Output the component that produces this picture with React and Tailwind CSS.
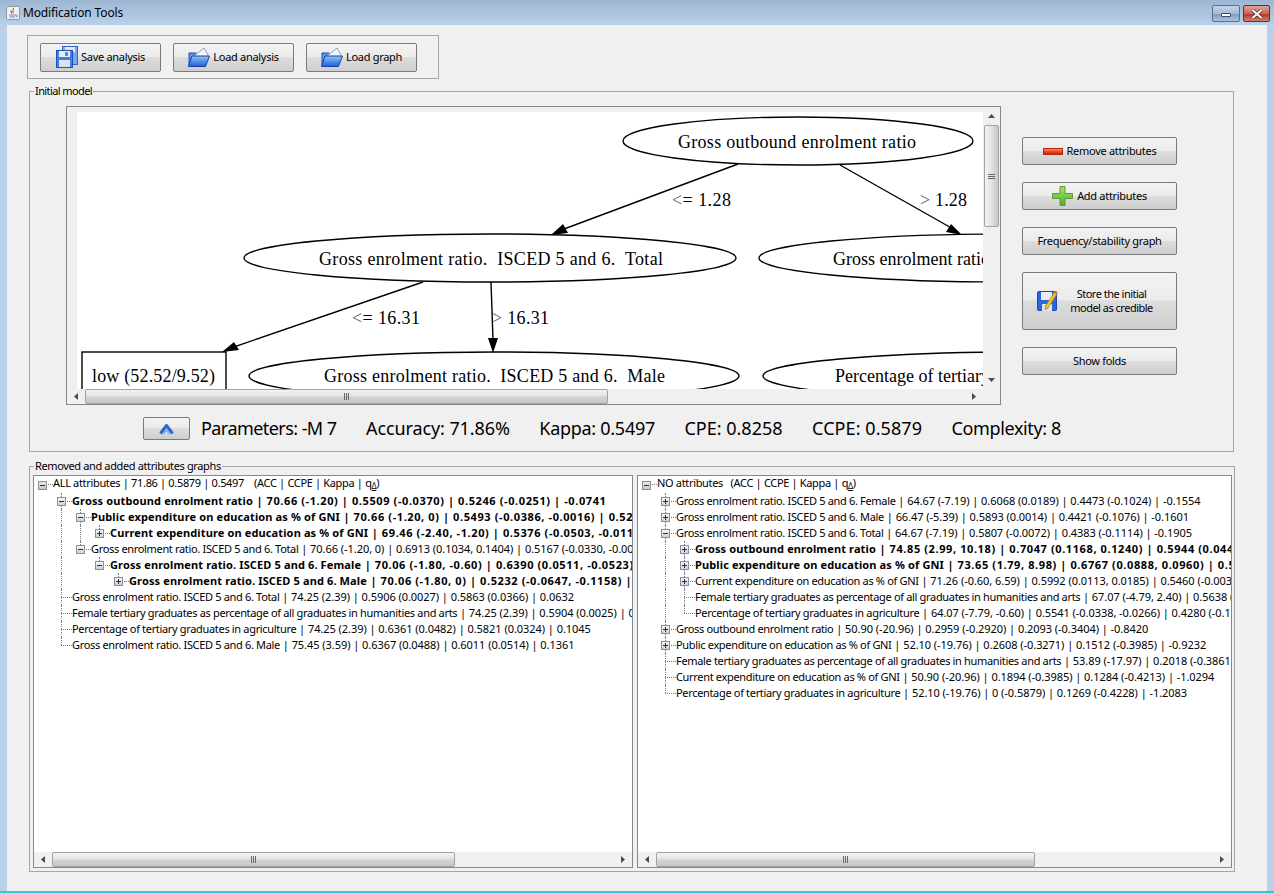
import React from "react";

const Btn = ({ className = "", children }) => (
  <div className={"relative flex items-center justify-center rounded-[2px] border border-[#7b7b7b] bg-[linear-gradient(#f3f3f3_0%,#ebebeb_48%,#dddddd_50%,#cecece_100%)] text-[11px] leading-[14px] tracking-[-0.3px] text-black " + className}>
    {children}
  </div>
);

const Floppy = () => (
  <svg width="22" height="22" viewBox="0 0 22 22" className="shrink-0">
    <rect x="6.5" y="0.5" width="15" height="18" fill="#7fa8ec" stroke="#2f62c9" />
    <rect x="9" y="1" width="10" height="5" fill="#dfe8f7" />
    <rect x="0.5" y="4.5" width="16" height="17" fill="#3f7fe6" stroke="#1f50b5" />
    <rect x="3" y="5" width="11" height="6" fill="#e9eef7" />
    <rect x="9" y="6" width="3" height="4" fill="#6f8ab5" />
    <rect x="3" y="14" width="11" height="7" fill="#dbe3ef" />
  </svg>
);

const Folder = () => (
  <svg width="22" height="20" viewBox="0 0 22 20" className="shrink-0">
    <defs>
      <linearGradient id="fd" x1="0" y1="0" x2="0" y2="1">
        <stop offset="0" stopColor="#8fc4f7" />
        <stop offset="1" stopColor="#1c5fd8" />
      </linearGradient>
    </defs>
    <path d="M1 6 L8 6 L10 8 L10 18 L1 18 Z" fill="#5f96e6" stroke="#1d4db3" />
    <path d="M6 9 L16 1 L20 8 L20 11 L8 12 Z" fill="#f4f6fb" stroke="#8ea0c0" />
    <path d="M4 9 L21.5 9 L17.5 19.5 L0.5 19.5 Z" fill="url(#fd)" stroke="#1742a8" />
  </svg>
);

const RedBar = () => (
  <svg width="20" height="7" viewBox="0 0 20 7" className="shrink-0">
    <defs>
      <linearGradient id="rb" x1="0" y1="0" x2="0" y2="1">
        <stop offset="0" stopColor="#ff9a6a" />
        <stop offset="0.5" stopColor="#f04a1c" />
        <stop offset="1" stopColor="#c81808" />
      </linearGradient>
    </defs>
    <rect x="0.5" y="0.5" width="19" height="6" fill="url(#rb)" stroke="#b02a14" />
  </svg>
);

const GreenPlus = () => (
  <svg width="21" height="20" viewBox="0 0 21 20" className="shrink-0">
    <defs>
      <linearGradient id="gp" x1="0" y1="0" x2="0" y2="1">
        <stop offset="0" stopColor="#a6e46a" />
        <stop offset="1" stopColor="#4eae2c" />
      </linearGradient>
    </defs>
    <path d="M8 .5 H13 V7.5 H20.5 V12.5 H13 V19.5 H8 V12.5 H.5 V7.5 H8 Z" fill="url(#gp)" stroke="#5d9a3a" />
  </svg>
);

const PencilFloppy = () => (
  <svg width="21" height="22" viewBox="0 0 21 22" className="shrink-0">
    <rect x="0.5" y="1.5" width="19" height="19" rx="1" fill="#2a66dd" stroke="#1c47a8" />
    <rect x="4" y="2" width="11" height="8" fill="#e8edf5" />
    <rect x="5" y="14" width="10" height="7" fill="#dfe5ee" />
    <path d="M18 1 L20.5 3 L11 18 L8 19.5 L8.5 16 Z" fill="#f4c430" stroke="#a87a10" strokeWidth="0.7" />
    <path d="M18 1 L20.5 3 L19.4 4.6 L16.9 2.8 Z" fill="#e06a50" />
  </svg>
);

const Chevron = () => (
  <svg width="15" height="12" viewBox="0 0 15 12">
    <path d="M1.5 10.5 L7.5 2.5 L13.5 10.5" fill="none" stroke="#2a67d6" strokeWidth="3" strokeLinejoin="round" />
    <path d="M4.5 11 L7.5 7 L10.5 11" fill="none" stroke="#7fb2f2" strokeWidth="1.5" />
  </svg>
);

const JavaIcon = () => (
  <svg width="14" height="14" viewBox="0 0 14 14">
    <rect x="0.5" y="0.5" width="13" height="13" rx="1" fill="#eef1f5" stroke="#8b97a6" />
    <path d="M7 2 C9 4 5 5 7.5 7 M4.5 4.5 C6 5.5 5 6.5 6 7.5" fill="none" stroke="#d8571c" strokeWidth="1.1" />
    <path d="M3 9 H10 M3.5 11 H9 M10 9 C12 9 12 11 10 11" fill="none" stroke="#5a78b0" strokeWidth="0.9" />
  </svg>
);

const Tri = ({ dir }) => {
  const pts = { l: "4,0 4,7 0,3.5", r: "0,0 0,7 4,3.5", u: "0,4 7,4 3.5,0", d: "0,0 7,0 3.5,4" }[dir];
  const h = dir === "l" || dir === "r";
  return (
    <svg width={h ? 4 : 7} height={h ? 7 : 4} viewBox={h ? "0 0 4 7" : "0 0 7 4"}>
      <polygon points={pts} fill="#4a4a4a" />
    </svg>
  );
};

const HScroll = ({ thumb }) => (
  <div className="flex h-[15px] shrink-0 bg-[#f0f0f0]">
    <div className="flex w-[18px] items-center justify-center"><Tri dir="l" /></div>
    <div className="flex flex-1">
      <div style={{ width: thumb }} className="flex items-center justify-center gap-px rounded-[2px] border border-[#a2a2a2] bg-[linear-gradient(#f3f3f3,#e4e4e4_45%,#d2d2d2_55%,#c6c6c6)]">
        <span className="h-[7px] w-px bg-[#666666]" />
        <span className="h-[7px] w-px bg-[#666666]" />
        <span className="h-[7px] w-px bg-[#666666]" />
      </div>
    </div>
    <div className="flex w-[19px] items-center justify-center"><Tri dir="r" /></div>
  </div>
);

const Graph = () => (
  <svg width="906" height="277" viewBox="77 112 906 277" className="block bg-white font-['Liberation_Serif',serif] text-[18px]">
    <g fill="none" stroke="#000" strokeWidth="1.4">
      <ellipse cx="798" cy="141" rx="175" ry="24" />
      <ellipse cx="490" cy="258" rx="246" ry="24" />
      <ellipse cx="1005" cy="258" rx="246" ry="24" />
      <ellipse cx="494" cy="376" rx="245" ry="24" />
      <ellipse cx="1023" cy="376" rx="260" ry="24" />
      <rect x="82" y="352" width="144" height="60" />
      <path d="M738 164 L556 232" />
      <path d="M840 165 L955 230" />
      <path d="M423 282 L228 349" />
      <path d="M491 282 L493 340" />
    </g>
    <polygon points="551,235 563,224 568,233" fill="#000" />
    <polygon points="962,235 951,224 946,232" fill="#000" />
    <polygon points="222,352 234,342 239,350" fill="#000" />
    <polygon points="493,353 488,338 498,338" fill="#000" />
    <g fill="#000">
      <text x="678" y="148" textLength="238">Gross outbound enrolment ratio</text>
      <text x="319" y="265" textLength="344" xmlSpace="preserve">Gross enrolment ratio.  ISCED 5 and 6.  Total</text>
      <text x="833" y="265">Gross enrolment ratio.  ISCED 5 and 6.  Female</text>
      <text x="324" y="382" textLength="341" xmlSpace="preserve">Gross enrolment ratio.  ISCED 5 and 6.  Male</text>
      <text x="835" y="382">Percentage of tertiary graduates in agriculture</text>
      <text x="92" y="382" textLength="123">low (52.52/9.52)</text>
      <text x="672" y="206" textLength="59"><tspan fill="#666666">&lt;</tspan>= 1.28</text>
      <text x="920" y="206" textLength="47"><tspan fill="#666666">&gt;</tspan> 1.28</text>
      <text x="352" y="324" textLength="68"><tspan fill="#666666">&lt;</tspan>= 16.31</text>
      <text x="492" y="324" textLength="57"><tspan fill="#666666">&gt;</tspan> 16.31</text>
    </g>
  </svg>
);

const GraphPane = () => (
  <div className="ml-[36px] mt-[14px] flex h-[299px] w-[935px] shrink-0 flex-col border border-[#828790]">
    <div className="flex min-h-0 flex-1">
      <div className="h-[282px] flex-1 overflow-hidden bg-[#f0f0f0] pl-[10px] pt-[5px]">
        <Graph />
      </div>
      <div className="flex w-[17px] shrink-0 flex-col bg-[#f0f0f0]">
        <div className="flex h-[18px] items-center justify-center"><Tri dir="u" /></div>
        <div className="flex-1 px-px">
          <div className="flex h-[102px] flex-col items-center justify-center gap-px rounded-[2px] border border-[#a2a2a2] bg-[linear-gradient(90deg,#f3f3f3,#e2e2e2_50%,#c8c8c8)]">
            <span className="h-px w-[7px] bg-[#666666]" />
            <span className="h-px w-[7px] bg-[#666666]" />
            <span className="h-px w-[7px] bg-[#666666]" />
          </div>
        </div>
        <div className="flex h-[18px] items-center justify-center"><Tri dir="d" /></div>
      </div>
    </div>
    <div className="flex">
      <div className="flex-1"><HScroll thumb={523} /></div>
      <div className="h-[15px] w-[17px] bg-[#f0f0f0]" />
    </div>
  </div>
);

const Handle = ({ open }) => (
  <span className="absolute left-1 top-[calc(50%-4px)] z-10 h-[9px] w-[9px] border border-[#8a8f96] bg-[linear-gradient(#f6f6f6,#cfcfcf)]">
    <span className="absolute left-[1px] top-[3px] h-px w-[5px] bg-[#1c2f6b]" />
    {!open && <span className="absolute left-[3px] top-[1px] h-[5px] w-px bg-[#1c2f6b]" />}
  </span>
);

const DOT = "border-dotted border-[#7d7d7d]";

const n = (text, opts = {}, children) => ({ text, bold: opts.b, children, open: opts.o });

const RowText = ({ node }) => {
  const idx = node.text.indexOf(" | ");
  const name = node.text.slice(0, idx);
  const vals = node.text.slice(idx);
  return node.bold ? (
    <span className="whitespace-pre font-bold">
      <span className="tracking-[0.13px]">{name}</span>
      <span className="tracking-[0.6px]">{vals}</span>
    </span>
  ) : (
    <span className="whitespace-pre">
      <span className="tracking-[-0.33px]">{name}</span>
      <span className="tracking-[-0.05px]">{vals}</span>
    </span>
  );
};

const renderRows = (nodes, guides) =>
  nodes.flatMap((node, i) => {
    const last = i === nodes.length - 1;
    const row = (
      <div key={guides.length + "-" + i + node.text} className="flex h-4 overflow-hidden whitespace-nowrap leading-4">
        {guides.map((g, k) => (
          <span key={k} className="relative h-4 w-[19px] shrink-0">
            {g && <span className={"absolute bottom-0 left-2 top-0 border-l " + DOT} />}
          </span>
        ))}
        <span className="relative h-4 w-[19px] shrink-0">
          <span className={"absolute left-2 top-0 border-l " + DOT + (last ? " h-2" : " h-4")} />
          <span className={"absolute left-2 top-2 w-[11px] border-t " + DOT} />
          {node.children !== undefined && <Handle open={node.open} />}
        </span>
        <RowText node={node} />
      </div>
    );
    const kids = node.open && node.children ? renderRows(node.children, [...guides, !last]) : [];
    return [row, ...kids];
  });

const Qdelta = () => (
  <>q<sub className="text-[8px] underline">Δ</sub>)</>
);

const Tree = ({ rootText, rows, thumb, className }) => (
  <div className={"flex flex-col border border-[#7f8a96] bg-white text-[11px] text-black " + className}>
    <div className="min-h-0 flex-1 overflow-hidden">
      <div className="relative flex h-[17px] whitespace-nowrap">
        <span className="relative h-[17px] w-[19px] shrink-0">
          <span className={"absolute left-2 top-2 w-[11px] border-t " + DOT} />
          <span className="absolute left-1 top-[5px] h-[9px] w-[9px] border border-[#8a8f96] bg-[linear-gradient(#e8e8e8,#c8c8c8)]">
            <span className="absolute left-[1px] top-[3px] h-px w-[5px] bg-[#1c2f6b]" />
          </span>
        </span>
        <span className="-mt-px whitespace-pre leading-4 tracking-[-0.33px]">{rootText}<Qdelta /></span>
      </div>
      {renderRows(rows, [false])}
    </div>
    <HScroll thumb={thumb} />
  </div>
);

const leftRows = [
  n("Gross outbound enrolment ratio | 70.66 (-1.20) | 0.5509 (-0.0370) | 0.5246 (-0.0251) | -0.0741", { b: 1, o: 1 }, [
    n("Public expenditure on education as % of GNI | 70.66 (-1.20, 0) | 0.5493 (-0.0386, -0.0016) | 0.5212 (-0.0285", { b: 1, o: 1 }, [
      n("Current expenditure on education as % of GNI | 69.46 (-2.40, -1.20) | 0.5376 (-0.0503, -0.0117) | 0.51", { b: 1 }, []),
    ]),
    n("Gross enrolment ratio. ISCED 5 and 6. Total | 70.66 (-1.20, 0) | 0.6913 (0.1034, 0.1404) | 0.5167 (-0.0330, -0.0079)", { o: 1 }, [
      n("Gross enrolment ratio. ISCED 5 and 6. Female | 70.06 (-1.80, -0.60) | 0.6390 (0.0511, -0.0523) | 0.51", { b: 1, o: 1 }, [
        n("Gross enrolment ratio. ISCED 5 and 6. Male | 70.06 (-1.80, 0) | 0.5232 (-0.0647, -0.1158) | 0.5", { b: 1 }, []),
      ]),
    ]),
  ]),
  n("Gross enrolment ratio. ISCED 5 and 6. Total | 74.25 (2.39) | 0.5906 (0.0027) | 0.5863 (0.0366) | 0.0632"),
  n("Female tertiary graduates as percentage of all graduates in humanities and arts | 74.25 (2.39) | 0.5904 (0.0025) | 0.5850 (0.0353)"),
  n("Percentage of tertiary graduates in agriculture | 74.25 (2.39) | 0.6361 (0.0482) | 0.5821 (0.0324) | 0.1045"),
  n("Gross enrolment ratio. ISCED 5 and 6. Male | 75.45 (3.59) | 0.6367 (0.0488) | 0.6011 (0.0514) | 0.1361"),
];

const rightRows = [
  n("Gross enrolment ratio. ISCED 5 and 6. Female | 64.67 (-7.19) | 0.6068 (0.0189) | 0.4473 (-0.1024) | -0.1554", {}, []),
  n("Gross enrolment ratio. ISCED 5 and 6. Male | 66.47 (-5.39) | 0.5893 (0.0014) | 0.4421 (-0.1076) | -0.1601", {}, []),
  n("Gross enrolment ratio. ISCED 5 and 6. Total | 64.67 (-7.19) | 0.5807 (-0.0072) | 0.4383 (-0.1114) | -0.1905", { o: 1 }, [
    n("Gross outbound enrolment ratio | 74.85 (2.99, 10.18) | 0.7047 (0.1168, 0.1240) | 0.5944 (0.0447, 0.1561)", { b: 1 }, []),
    n("Public expenditure on education as % of GNI | 73.65 (1.79, 8.98) | 0.6767 (0.0888, 0.0960) | 0.5720 (0.0223", { b: 1 }, []),
    n("Current expenditure on education as % of GNI | 71.26 (-0.60, 6.59) | 0.5992 (0.0113, 0.0185) | 0.5460 (-0.0037, 0.1077)", {}, []),
    n("Female tertiary graduates as percentage of all graduates in humanities and arts | 67.07 (-4.79, 2.40) | 0.5638 (-0.0241"),
    n("Percentage of tertiary graduates in agriculture | 64.07 (-7.79, -0.60) | 0.5541 (-0.0338, -0.0266) | 0.4280 (-0.1217, -0.0103)"),
  ]),
  n("Gross outbound enrolment ratio | 50.90 (-20.96) | 0.2959 (-0.2920) | 0.2093 (-0.3404) | -0.8420", {}, []),
  n("Public expenditure on education as % of GNI | 52.10 (-19.76) | 0.2608 (-0.3271) | 0.1512 (-0.3985) | -0.9232", {}, []),
  n("Female tertiary graduates as percentage of all graduates in humanities and arts | 53.89 (-17.97) | 0.2018 (-0.3861) | -0.9"),
  n("Current expenditure on education as % of GNI | 50.90 (-20.96) | 0.1894 (-0.3985) | 0.1284 (-0.4213) | -1.0294"),
  n("Percentage of tertiary graduates in agriculture | 52.10 (-19.76) | 0 (-0.5879) | 0.1269 (-0.4228) | -1.2083"),
];

const GroupLabel = ({ className, children }) => (
  <span className={"absolute -top-[8px] left-[4px] bg-[#f0f0f0] px-px text-[11px] leading-[14px] text-black " + className}>{children}</span>
);

export default function App() {
  return (
    <div className="flex h-[893px] w-[1274px] flex-col overflow-hidden bg-[#b9d1ea] font-['Noto_Sans',sans-serif]">
      <div className="flex h-[25px] shrink-0 items-start bg-[linear-gradient(#9db7d3,#b9d1ea)]">
        <div className="ml-[6px] mt-[6px]"><JavaIcon /></div>
        <div className="ml-[3px] mt-[5px] text-[12px] leading-[15px] tracking-[-0.15px] text-black">Modification Tools</div>
        <div className="ml-auto mr-[4px] mt-[5px] flex gap-[3px]">
          <div className="flex h-[17px] w-[28px] items-center justify-center rounded-[2px] border border-[#5c6f88] bg-[linear-gradient(#c3d4e7,#a4bcd8_50%,#7f9dc0_55%,#a9c2dd)]">
            <span className="mt-[2px] h-[4px] w-[10px] rounded-[1px] border border-[#3f4f66] bg-white" />
          </div>
          <div className="flex h-[17px] w-[27px] items-center justify-center rounded-[2px] border border-[#6e2c26] bg-[linear-gradient(#e0a39c,#c8675b_50%,#b23a2c_55%,#cf7f72)]">
            <svg width="12" height="10" viewBox="0 0 12 10">
              <path d="M1.5 1 L10.5 9 M10.5 1 L1.5 9" stroke="#4a2420" strokeWidth="3.4" />
              <path d="M1.5 1 L10.5 9 M10.5 1 L1.5 9" stroke="#ffffff" strokeWidth="2" />
            </svg>
          </div>
        </div>
      </div>

      <div className="flex min-h-0 flex-1">
        <div className="w-[7px] shrink-0" />
        <div className="flex min-w-0 flex-1 flex-col bg-[#f0f0f0] text-[11px]">
          <div className="ml-[20px] mt-[10px] flex h-[44px] w-[412px] shrink-0 items-center gap-[12px] border border-[#a6a6a6] pl-[12px]">
            <Btn className="h-[29px] w-[121px] gap-[3px]"><Floppy /><span>Save analysis</span></Btn>
            <Btn className="h-[29px] w-[121px] gap-[3px]"><Folder /><span>Load analysis</span></Btn>
            <Btn className="h-[29px] w-[111px] gap-[3px]"><Folder /><span>Load graph</span></Btn>
          </div>

          <div className="relative ml-[22px] mt-[12px] h-[361px] w-[1205px] shrink-0 border border-[#a6a6a6]">
            <GroupLabel className="tracking-[-0.6px]">Initial model</GroupLabel>
            <div className="flex">
              <GraphPane />
              <div className="ml-[21px] mt-[45px] flex w-[155px] shrink-0 flex-col gap-[17px]">
                <Btn className="h-[28px] gap-[4px]"><RedBar /><span>Remove attributes</span></Btn>
                <Btn className="h-[28px] gap-[4px]"><GreenPlus /><span>Add attributes</span></Btn>
                <Btn className="h-[28px]">Frequency/stability graph</Btn>
                <Btn className="h-[58px] gap-[12px] pr-[9px]"><PencilFloppy /><span className="text-center tracking-[-0.5px]">Store the initial<br />model as credible</span></Btn>
                <Btn className="h-[28px]">Show folds</Btn>
              </div>
            </div>
            <div className="ml-[113px] mt-[12px] flex items-center text-[18px] leading-[23px] text-black">
              <Btn className="h-[23px] w-[47px]"><Chevron /></Btn>
              <div className="ml-[11px] flex gap-[29.5px] whitespace-nowrap">
                <span className="tracking-[-0.56px]">Parameters: -M 7</span>
                <span className="tracking-[-0.1px]">Accuracy: 71.86%</span>
                <span className="tracking-[-0.28px]">Kappa: 0.5497</span>
                <span>CPE: 0.8258</span>
                <span className="tracking-[0.08px]">CCPE: 0.5879</span>
                <span className="tracking-[-0.38px]">Complexity: 8</span>
              </div>
            </div>
          </div>

          <div className="relative ml-[22px] mt-[14px] flex h-[406px] w-[1206px] shrink-0 gap-[4px] border border-[#a6a6a6] pl-[3px] pt-[8px]">
            <GroupLabel className="tracking-[-0.37px]">Removed and added attributes graphs</GroupLabel>
            <Tree className="h-[393px] w-[600px]" rootText="ALL attributes | 71.86 | 0.5879 | 0.5497    (ACC | CCPE | Kappa | " rows={leftRows} thumb={403} />
            <Tree className="h-[393px] w-[595px]" rootText="NO attributes   (ACC | CCPE | Kappa | " rows={rightRows} thumb={379} />
          </div>
        </div>
        <div className="w-[7px] shrink-0" />
      </div>
      <div className="h-[2px] shrink-0 bg-[#2fc6e2]" />
    </div>
  );
}
